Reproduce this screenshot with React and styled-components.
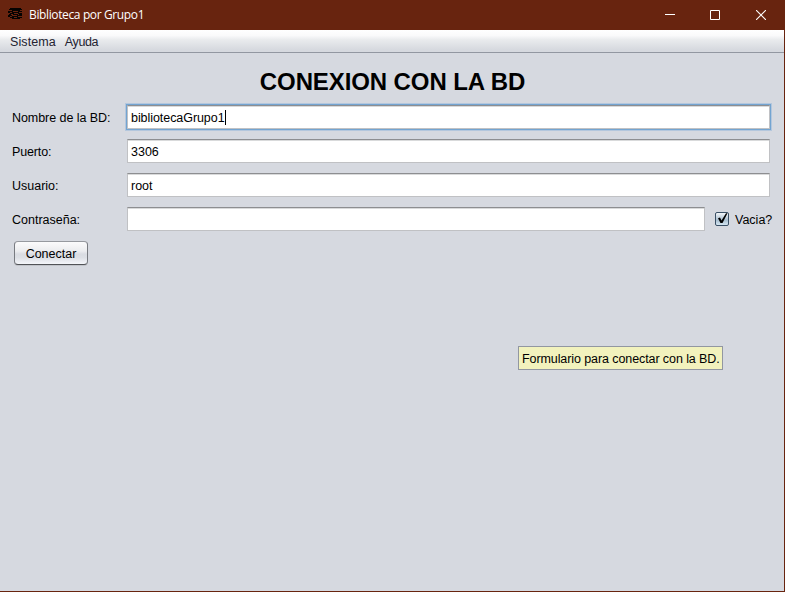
import React from "react";
import styled, { createGlobalStyle } from "styled-components";

const GlobalStyle = createGlobalStyle`
  * { box-sizing: border-box; }
  body { margin: 0; overflow: hidden; }
`;

const Window = styled.div`
  position: relative;
  display: flex;
  flex-direction: column;
  width: 785px;
  height: 592px;
  background: #d6d9e0;
  border: solid #68240f;
  border-width: 0 1px 1px 0;
  font: 12.5px/16px "Liberation Sans", Arial, sans-serif;
  color: #000;
`;

const TitleBar = styled.header`
  display: flex;
  align-items: center;
  height: 30px;
  flex: none;
  padding-left: 8px;
  margin-right: -1px;
  background: #68240f;
  color: #fff;
`;

const Title = styled.span`
  flex: 1;
  margin-left: 6px;
  font: 12px/16px "Open Sans", "Noto Sans", sans-serif;
  letter-spacing: -0.37px;
  white-space: nowrap;
`;

const WindowButton = styled.span`
  display: flex;
  align-items: center;
  justify-content: center;
  width: 45px;
  height: 30px;
  svg { display: block; }
`;

const Controls = styled.div`
  display: flex;
  width: 138px;
  justify-content: space-between;
  padding-right: 2px;
`;

const MenuBar = styled.nav`
  display: flex;
  flex: none;
  gap: 9px;
  height: 23px;
  padding: 4px 10px 0;
  background: linear-gradient(#fff 0, #fafafb 25%, #e9ebed 45%, #d6d9df 90%);
  border-bottom: 1px solid #9297a1;
  color: #232331;
`;

const Text = styled.span`
  white-space: nowrap;
  letter-spacing: ${(p) => p.$spacing || "0"};
`;

const Label = styled(Text)`
  padding-top: 2px;
`;

const Heading = styled.h1`
  flex: none;
  margin: 15px 0 8px 1px;
  font-size: 24px;
  line-height: 28px;
  font-weight: bold;
  text-align: center;
  letter-spacing: -0.1px;
`;

const Form = styled.form`
  display: grid;
  grid-template-columns: 115px 1fr;
  grid-auto-rows: 24px;
  row-gap: 10px;
  align-items: center;
  margin: 1px 14px 0 12px;
`;

const Field = styled.div`
  display: flex;
  align-items: center;
  height: 24px;
  flex: ${(p) => p.$width ? `0 0 ${p.$width}px` : "1"};
  padding: 1px 3px 0;
  background: #fff;
  border: 1px solid #c0c1c4;
  border-top-color: #8d8e91;
  box-shadow: inset 0 1px #d9dadb${(p) => p.$focused ? ", 0 0 0 1px #73a4d1, 0 0 0 2px #b4c7dd" : ""};
`;

const Caret = styled.span`
  width: 1px;
  height: 15px;
  margin-top: -1px;
  background: #000;
`;

const PasswordRow = styled.div`
  display: flex;
  align-items: center;
  margin-right: -4px;
`;

const CheckBox = styled.span`
  width: 14px;
  height: 14px;
  margin: 0 6px 1px 10px;
  border: 1px solid #394f65;
  border-radius: 2px;
  background: linear-gradient(#f3f6f9, #b4c6d5 50%, #a9bfd0 60%, #d5e6f2);
  svg { display: block; overflow: visible; }
`;

const Button = styled.button`
  grid-column: 1;
  width: 74px;
  height: 24px;
  margin-left: 2px;
  padding: 1px 0 0;
  border: 1px solid #777a80;
  border-top-color: #96999f;
  border-bottom-color: #515357;
  border-radius: 4px;
  background: linear-gradient(#fbfbfc, #ebecef 42%, #d9dce2 55%, #dcdfe5 70%, #f4f6fa);
  box-shadow: 0 1px #c1c4ca;
  color: #000;
  font: inherit;
  white-space: nowrap;
`;

const Tooltip = styled.div`
  position: absolute;
  left: 518px;
  top: 346px;
  width: 205px;
  height: 24px;
  padding: 4px 3px;
  border: 1px solid #9297a1;
  background: #f2f2bd;
  white-space: nowrap;
`;

function BooksIcon() {
  return (
    <svg width="15" height="14" viewBox="0 0 15 14" fill="none" stroke="#050302" shapeRendering="crispEdges">
      <path fill="#050302" stroke="none" d="M2 0h11v1h1v1h-2v1H4V2H1V1h1z" />
      <path d="M0 3.5h5M10 3.5h4M0 4.5h2M4 4.5h7M2 5.5h4M10 5.5h4M1 6.5h2M5 6.5h5M11 6.5h3M0 7.5h4M9 7.5h5M0 8.5h2M4 8.5h6M2 9.5h4M9 9.5h5M4 10.5h8" />
    </svg>
  );
}

export default function App() {
  return (
    <>
      <GlobalStyle />
      <Window>
        <TitleBar>
          <BooksIcon />
          <Title>Biblioteca por Grupo1</Title>
          <Controls>
            <WindowButton><svg width="10" height="10"><path d="M0 4.5h10" stroke="#fff" /></svg></WindowButton>
            <WindowButton><svg width="10" height="10"><path d="M.5.5h9v9h-9z" fill="none" stroke="#fff" /></svg></WindowButton>
            <WindowButton><svg width="10" height="10"><path d="M0 0l10 10M10 0L0 10" stroke="#fff" strokeWidth="1.1" /></svg></WindowButton>
          </Controls>
        </TitleBar>
        <MenuBar>
          <Text $spacing="0.1px">Sistema</Text>
          <Text $spacing="-0.4px">Ayuda</Text>
        </MenuBar>
        <Heading>CONEXION CON LA BD</Heading>
        <Form>
          <Label $spacing="-0.06px">Nombre de la BD:</Label>
          <Field $focused><Text $spacing="-0.06px">bibliotecaGrupo1</Text><Caret /></Field>
          <Label $spacing="-0.15px">Puerto:</Label>
          <Field><Text>3306</Text></Field>
          <Label>Usuario:</Label>
          <Field><Text>root</Text></Field>
          <Label>Contraseña:</Label>
          <PasswordRow>
            <Field $width={578} />
            <CheckBox>
              <svg width="12" height="12"><path d="M2 5.2L4 4.5L5.5 7.5L10 .2L11.5 .2L6.5 10H4.5z" fill="#000" /></svg>
            </CheckBox>
            <Label>Vacia?</Label>
          </PasswordRow>
          <Button type="button">Conectar</Button>
        </Form>
        <Tooltip><Text $spacing="-0.09px">Formulario para conectar con la BD.</Text></Tooltip>
      </Window>
    </>
  );
}
